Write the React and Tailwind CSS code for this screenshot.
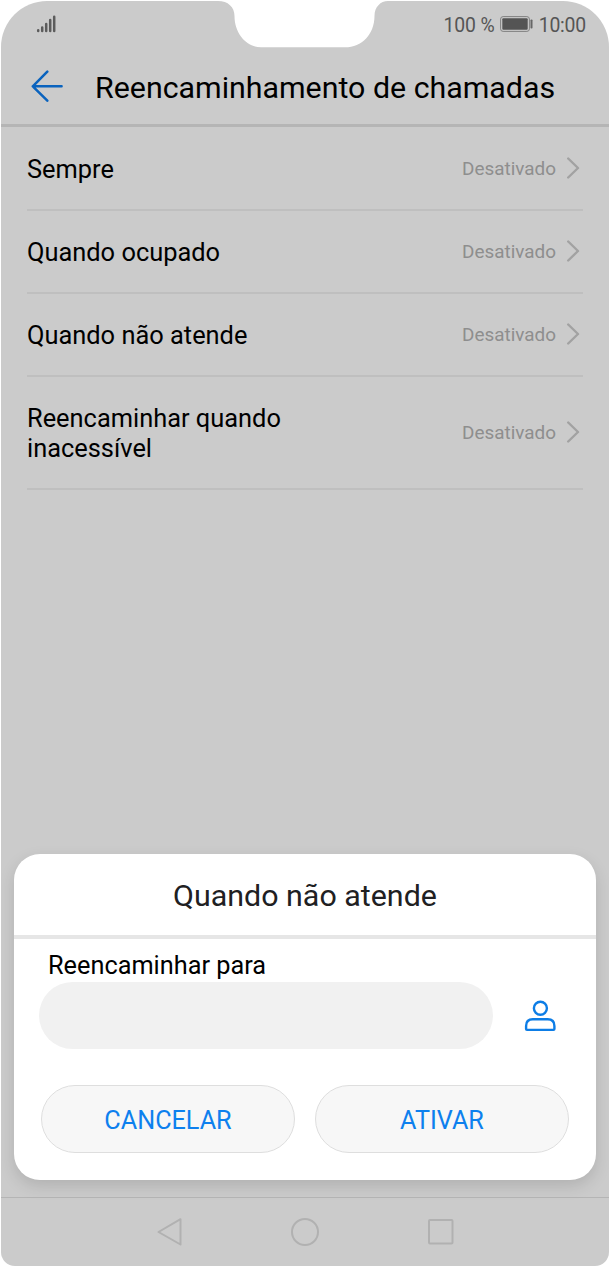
const ROWS = [
  { label: 'Sempre', value: 'Desativado' },
  { label: 'Quando ocupado', value: 'Desativado' },
  { label: 'Quando não atende', value: 'Desativado' },
  { label: 'Reencaminhar quando inacessível', value: 'Desativado', tall: true },
];

function Notch() {
  return (
    <svg className="absolute left-[215px] -top-px" width="174" height="48" viewBox="217 0 174 48" aria-hidden="true">
      <path d="M217 0V1H219C229 1 235.500 7 235.500 16C235.500 34 248 47.300 262 47.300H346C363 47.300 375.500 34 375.500 16C375.500 7 381.500 1 389 1H391V0Z" fill="#fff" />
    </svg>
  );
}

function SignalIcon() {
  return (
    <svg width="20" height="18" viewBox="0 0 20 18" fill="none" stroke="#5c5c5c" strokeWidth="2.500" strokeLinecap="round" aria-hidden="true">
      <path d="M2.200 15.200V15.900M6.200 12.500V15.900M10.200 9V15.900M14.200 5V15.900M18.200 1.800V15.900" />
    </svg>
  );
}

function BatteryIcon() {
  return (
    <svg width="33" height="16" viewBox="0 0 33 16" fill="none" aria-hidden="true">
      <rect x="0.600" y="0.600" width="28.800" height="14.800" rx="2.500" stroke="#808080" strokeWidth="1" />
      <rect x="2.300" y="2.300" width="25.400" height="11.400" rx="1" fill="#545454" />
      <rect x="30.500" y="3.500" width="2" height="9" rx="0.800" fill="#666" />
    </svg>
  );
}

function StatusBar() {
  return (
    <div className="flex h-[46px] items-center justify-between pl-[35px] pr-[23px] text-[19.400px] text-[#555]">
      <SignalIcon />
      <div className="flex items-center">
        <span className="pt-[3px] tracking-[-0.100px]">100 %</span>
        <span className="ml-[5px] mr-1.5"><BatteryIcon /></span>
        <span className="pt-[3px] tracking-[-0.200px]">10:00</span>
      </div>
    </div>
  );
}

function Header() {
  return (
    <header className="flex h-[80px] items-center border-b-3 border-[#b5b5b5] pl-[30px]">
      <svg width="33" height="32" viewBox="0 0 33 32" fill="none" stroke="#0a63be" strokeWidth="2.500" strokeLinecap="round" strokeLinejoin="round" aria-hidden="true">
        <path d="M30.600 16.300H1.800M16.300 1.700L1.800 16.300L16.300 30.700" />
      </svg>
      <h1 className="ml-[31px] whitespace-nowrap pt-[5px] text-[30.350px] leading-9">Reencaminhamento de chamadas</h1>
    </header>
  );
}

function Row({ label, value, tall }) {
  return (
    <li className={`flex items-center border-b-2 border-[#bfbfbf] ${tall ? 'h-[113px]' : 'h-[83px]'}`}>
      <span className="w-[290px] pt-px text-[25.400px] leading-[30px]">{label}</span>
      <span className="ml-auto pt-[2px] text-[18.900px] text-[#8e8e8e]">{value}</span>
      <svg className="ml-[10px] mr-[2px] mb-px" width="15" height="22" viewBox="0 0 15 22" fill="none" stroke="#a2a2a2" strokeWidth="2.400" strokeLinecap="round" strokeLinejoin="round" aria-hidden="true">
        <path d="M2.200 1.500L12 11L2.200 20.500" />
      </svg>
    </li>
  );
}

function PersonIcon() {
  return (
    <svg width="32" height="32" viewBox="0 0 32 32" fill="none" stroke="#0d7de6" strokeWidth="2.400" strokeLinejoin="round" aria-hidden="true">
      <circle cx="16.400" cy="8.200" r="6.500" />
      <path d="M2.100 29V26Q2.100 19.300 8.800 19.300H23.700Q30.400 19.300 30.400 26V29Q30.400 29.900 29.500 29.900H3Q2.100 29.900 2.100 29Z" />
    </svg>
  );
}

function ForwardDialog() {
  return (
    <div role="dialog" className="absolute left-[13px] top-[853px] h-[326px] w-[582px] rounded-[26px] bg-white shadow-[0_6px_16px_rgba(0,0,0,0.130)]">
      <h2 className="flex h-[85px] items-center justify-center border-b-4 border-[#e6e6e6] pt-[3px] text-[30.400px] text-[#202022]">Quando não atende</h2>
      <div className="pl-[34px] pt-[12px] text-[25.300px] leading-[30px]">Reencaminhar para</div>
      <div className="flex items-center pl-[25px]">
        <input aria-label="Reencaminhar para" className="mt-px h-[67px] w-[454px] rounded-full bg-[#f1f1f1] px-8 text-[25px] outline-none" />
        <button className="ml-[31px] mt-[2px]"><PersonIcon /></button>
      </div>
      <div className="mt-[36px] flex gap-5 px-[27px]">
        <button className="h-[68px] flex-1 rounded-full border border-[#dedede] bg-[#f7f7f7] pt-[4px] text-[25.200px] text-[#0d80ee]">CANCELAR</button>
        <button className="h-[68px] flex-1 rounded-full border border-[#dedede] bg-[#f7f7f7] pt-[4px] text-[25.200px] text-[#0d80ee]">ATIVAR</button>
      </div>
    </div>
  );
}

function NavBar() {
  return (
    <nav className="mt-auto flex h-[69px] items-center justify-center border-t border-[#b5b5b5]">
      <svg width="298" height="30" viewBox="0 0 298 30" fill="none" stroke="#b1b1b1" strokeWidth="2" strokeLinejoin="round" aria-hidden="true">
        <path d="M24.500 2.200L2.500 15L24.500 27.500Z" />
        <circle cx="149" cy="15" r="13" />
        <rect x="273" y="3" width="23.500" height="23.500" rx="1" />
      </svg>
    </nav>
  );
}

export default function App() {
  return (
    <div className="h-[1266px] w-[610px] overflow-hidden bg-white px-px pt-px font-['Roboto',sans-serif] text-black">
      <div className="relative flex h-[1265px] flex-col overflow-hidden rounded-b-[14px] rounded-t-[46px] bg-[#cbcbcb]">
        <StatusBar />
        <Header />
        <ul className="px-[26px] pt-px">
          {ROWS.map((row) => <Row key={row.label} {...row} />)}
        </ul>
        <NavBar />
        <Notch />
        <ForwardDialog />
      </div>
    </div>
  );
}
